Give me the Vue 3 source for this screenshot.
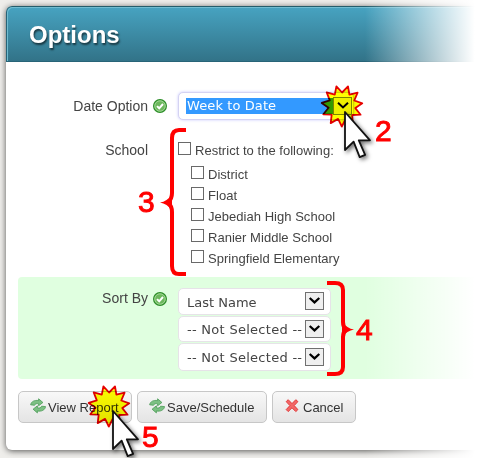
<script setup>
const schools = ['District', 'Float', 'Jebediah High School', 'Ranier Middle School', 'Springfield Elementary']
const sorts = ['Last Name', '-- Not Selected --', '-- Not Selected --']
const buttons = [
  { id: 'view', text: 'View Report', icon: 'sync' },
  { id: 'save', text: 'Save/Schedule', icon: 'sync' },
  { id: 'cancel', text: 'Cancel', icon: 'cross' },
]
const star = Array.from({ length: 22 }, (_, i) => {
  const r = i % 2 ? 13.5 : 20.5
  const a = ((i * 360) / 22 - 73) * (Math.PI / 180)
  return `${(22 + r * Math.cos(a)).toFixed(1)},${(22 + r * Math.sin(a)).toFixed(1)}`
}).join(' ')
</script>

<template>
  <div class="page">
    <section class="panel">
      <header class="head"><h1>Options</h1></header>
      <div class="body">
        <div class="row date">
          <div class="label"><span class="t-date">Date Option</span>
            <svg class="ok" viewBox="0 0 14 14"><circle cx="7" cy="7" r="6.4" fill="#6db75d" stroke="#2f8f2b" stroke-width="1.2" /><circle cx="7" cy="7" r="5.2" fill="none" stroke="#a4d99a" stroke-width=".9" /><path d="M4 7.1l2.2 2.2 3.8-4.3" fill="none" stroke="#fff" stroke-width="2" /></svg>
          </div>
          <div class="select wide"><span class="chosen">Week to Date</span></div>
        </div>
        <div class="row school">
          <div class="label"><span class="t-school">School</span></div>
          <div class="checks">
            <label class="check all"><i></i><span>Restrict to the following:</span></label>
            <label v-for="s in schools" :key="s" class="check"><i></i><span>{{ s }}</span></label>
          </div>
        </div>
        <div class="row sort">
          <div class="label"><span class="t-sort">Sort By</span>
            <svg class="ok" viewBox="0 0 14 14"><circle cx="7" cy="7" r="6.4" fill="#6db75d" stroke="#2f8f2b" stroke-width="1.2" /><circle cx="7" cy="7" r="5.2" fill="none" stroke="#a4d99a" stroke-width=".9" /><path d="M4 7.1l2.2 2.2 3.8-4.3" fill="none" stroke="#fff" stroke-width="2" /></svg>
          </div>
          <div class="selects">
            <div v-for="(s, i) in sorts" :key="i" class="select">
              <span>{{ s }}</span>
              <b class="arrow"><svg viewBox="0 0 17 16"><path d="M3.700 5l4.800 4.400L13.300 5" fill="none" stroke="#000" stroke-width="2.200" /></svg></b>
            </div>
          </div>
        </div>
        <div class="actions">
          <button v-for="b in buttons" :key="b.id" :class="b.id">
            <svg v-if="b.icon === 'sync'" viewBox="0 0 16 16">
              <g fill="#7cc083" stroke="#4a9a55" stroke-width=".8" stroke-linejoin="round">
                <path d="M.6 6.800C1.200 3.600 4.500 1.800 8.600 2.600V.8l4.300 3.700-4.300 3.300V5.800C6.500 5.200 5.100 5.800 4.500 7.300z" />
                <path d="M15.600 8.600c-.6 3.400-4 5.200-8.200 4.300v2l-4.300-3.700 4.300-3.400v2c2.200.6 3.600 0 4.200-1.600z" />
              </g>
            </svg>
            <svg v-else viewBox="0 0 16 16"><path d="M2.200 3.600l2-1.900L8 5.600l3.800-3.900 2.100 1.900L10.200 7.600l3.700 4-2.100 2L8 9.800l-3.800 3.800-2-2 3.700-4z" fill="#f26666" stroke="#e33b3b" stroke-linejoin="round" /></svg>
            <span>{{ b.text }}</span>
          </button>
        </div>
      </div>
    </section>
    <div class="fade"></div>

    <svg class="star star-a" viewBox="0 0 44 44"><polygon :points="star" fill="#ff0" stroke="#e60000" stroke-width="1.8" stroke-linejoin="round" /></svg>
    <svg class="drop" viewBox="0 0 19 18"><rect x=".5" y=".5" width="18" height="17" fill="#eef000" stroke="#7d8500" /><path d="M5 5.800l5 4.600 5-4.600" fill="none" stroke="#000" stroke-width="2" /></svg>
    <svg class="star star-b" viewBox="0 0 44 44"><polygon :points="star" fill="#ff0" stroke="#e60000" stroke-width="1.8" stroke-linejoin="round" /></svg>

    <svg v-for="c in ['a', 'b']" :key="c" class="cursor" :class="'cursor-' + c" viewBox="0 0 34 54">
      <path d="M2 2v38l8.600-8.300 6.100 15.400 5.400-2.300-6.300-14.500H27z" fill="#fff" stroke="#111" stroke-width="1.800" stroke-linejoin="round" />
    </svg>

    <svg class="brace left" viewBox="0 0 28 150"><path d="M26 3h-7q-7 0-7 8v55q0 6-4 9.500q4 3.500 4 9.500v54q0 8 7 8h7" fill="none" stroke="red" stroke-width="4" /><path d="M0 75.500q7-1 12-8v16q-5-7-12-8z" fill="red" /></svg>
    <svg class="brace right" viewBox="0 0 28 98"><path d="M1 4h8q8 0 8 7v32q0 5 3 7.500q-3 2.500-3 7.500v30q0 7-8 7H1" fill="none" stroke="red" stroke-width="4" /><path d="M28 50.500q-7-1-12-8v16q5-7 12-8z" fill="red" /></svg>
    <span class="num n2">2</span>
    <span class="num n3">3</span>
    <span class="num n4">4</span>
    <span class="num n5">5</span>
  </div>
</template>

<style>
body { overflow: hidden; }
</style>
<style scoped>
* { box-sizing: border-box; }
.page { position: relative; width: 478px; height: 458px; overflow: hidden; padding: 6px 0 0 6px; background: #efeeeb; font-family: "Liberation Sans", Arial, sans-serif; color: #444; }
.panel { width: 520px; height: 444px; background: #fff; border-radius: 6px; box-shadow: 0 1px 6px rgba(0,0,0,.65); }
.head { height: 56px; border: 1px solid #276478; border-top-color: #245d6c; border-radius: 6px 6px 0 0; background: linear-gradient(#47a3c1, #327388); box-shadow: inset 1px 1px 0 #70bcd0; padding: 11px 0 0 22px; }
h1 { margin: 0; font-size: 24px; line-height: 34px; color: #fff; text-shadow: 1px 2px 2px rgba(0,0,0,.6); }
.body { padding: 30px 0 0 12px; }
.row { display: flex; font-size: 14px; }
.label { width: 150px; margin-right: 10px; display: flex; justify-content: flex-end; gap: 5px; line-height: 16px; }
.ok { width: 14px; height: 14px; margin-top: 1px; }
.date { height: 45px; }
.date .label { padding-top: 6px; }
.date .ok, .sort .ok { margin-right: 1px; }
.select { display: flex; align-items: center; justify-content: space-between; width: 153px; background: #fff; border: 1px solid #e6e3e8; border-radius: 5px; font: 13px "DejaVu Sans", Verdana, sans-serif; padding: 0 6px 0 8px; white-space: nowrap; }
.wide { width: 176px; height: 28px; padding: 0 20px 0 7px; border-color: #d5d3f2; box-shadow: 0 0 3px #c9c9ff; letter-spacing: .1px; }
.chosen { width: 148px; height: 16px; line-height: 16px; background: #39f; color: #fff; padding-left: 1px; }
.school { height: 140px; }
.school .label { padding: 5px 20px 0 0; }
.checks { display: flex; flex-direction: column; padding-top: 5px; font-size: 13px; }
.check { display: flex; height: 21px; padding-left: 13px; gap: 4px; line-height: 15px; white-space: nowrap; letter-spacing: .03px; }
.check.all { height: 24px; padding-left: 0; }
.check i { width: 13px; height: 13px; border: 1px solid #696969; background: #fff; }
.check span { padding-top: 1px; }
.sort { height: 102px; background: #e0ffe0; border-radius: 4px; width: 500px; }
.sort .label { padding-top: 13px; }
.sort .ok { margin-top: 2px; }
.selects { padding-top: 11px; display: flex; flex-direction: column; gap: 1px; }
.selects .select { height: 27px; }
.selects .select:nth-child(n+2) { letter-spacing: .28px; }
.selects .select:nth-child(1) span { padding-top: 1px; }
.selects .select:nth-child(2) { height: 26px; }
.selects .select:nth-child(3) { height: 28px; }
.arrow { width: 19px; height: 18px; background: #efefef; border: 1px solid #707070; display: flex; margin-top: -1px; }
.arrow svg { width: 17px; height: 16px; }
.actions { display: flex; gap: 5px; padding-top: 12px; }
button { height: 32px; border: 1px solid #c7c7c7; border-radius: 5px; background: linear-gradient(#f8f8f8, #e4e4e4); font: 13px "Liberation Sans", Arial, sans-serif; color: #333; padding: 0 0 0 11px; display: flex; align-items: center; gap: 2px; white-space: nowrap; }
button svg { width: 16px; height: 16px; flex: none; margin-top: -2px; }
.view { width: 114px; }
.save { width: 130px; }
.cancel { width: 84px; gap: 3px; }
.fade { position: absolute; left: 365px; top: 0; width: 113px; height: 458px; background: linear-gradient(90deg, rgba(255,255,255,0), #fff 97%); }
.star { position: absolute; width: 44px; height: 44px; mix-blend-mode: multiply; }
.star-a { left: 320px; top: 84px; }
.star-b { left: 87px; top: 384px; }
.drop { position: absolute; left: 333px; top: 97px; width: 19px; height: 18px; }
.cursor { position: absolute; width: 34px; height: 54px; filter: drop-shadow(2px 2px 2px rgba(0,0,0,.55)); }
.cursor-a { left: 343px; top: 110px; }
.cursor-b { left: 111px; top: 409px; }
.brace { position: absolute; }
.left { left: 160px; top: 127px; width: 28px; height: 150px; }
.right { left: 326px; top: 279px; width: 28px; height: 98px; }
.num { position: absolute; font-size: 30px; line-height: 32px; color: red; -webkit-text-stroke: .9px red; }
.n2.num { left: 375px; top: 115px; }
.n3.num { left: 138px; top: 186px; }
.n4.num { left: 356px; top: 314px; }
.n5.num { left: 142px; top: 421px; }
</style>
